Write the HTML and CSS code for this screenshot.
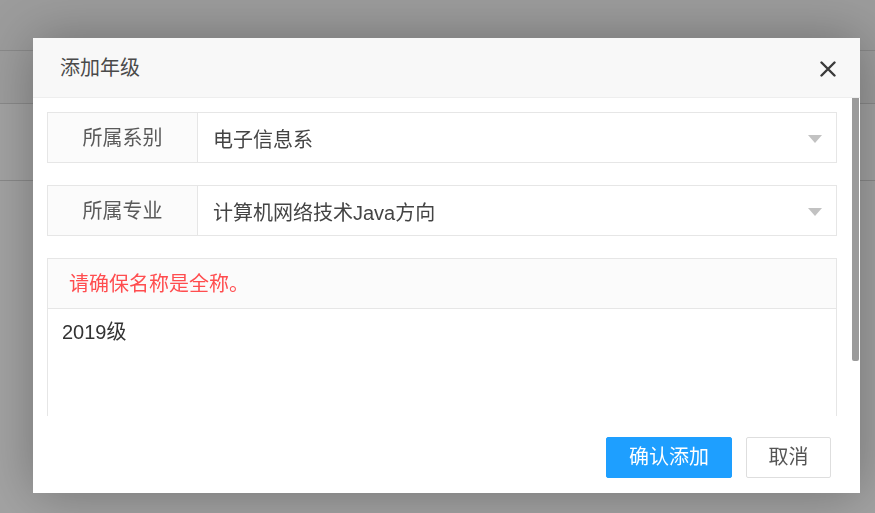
FILE: index.html
```html
<!DOCTYPE html>
<html lang="zh-CN">
<head>
  <meta charset="UTF-8">
  <meta name="viewport" content="width=device-width, initial-scale=1.0">
  <title>添加年级</title>
  <link rel="stylesheet" href="styles.css">
</head>
<body>
  <!-- page underneath the dialog -->
  <div class="page">
    <div class="page-row page-top"></div>
    <div class="page-row page-head"></div>
    <div class="page-row"></div>
  </div>

  <div class="shade"></div>

  <div class="layer">
    <div class="layer-title">
      <span>添加年级</span>
      <a class="layer-close" href="#" title="关闭">
        <svg width="16" height="16" viewBox="0 0 16 16">
          <path d="M1.5 1.5 L14.5 14.5 M14.5 1.5 L1.5 14.5" stroke="#3a3a3a" stroke-width="2.4" stroke-linecap="round"/>
        </svg>
      </a>
    </div>

    <div class="layer-content">
      <form class="form">
        <div class="form-item">
          <label class="form-label">所属系别</label>
          <div class="form-select">
            <span class="select-value">电子信息系</span>
            <i class="select-edge"></i>
          </div>
        </div>

        <div class="form-item">
          <label class="form-label">所属专业</label>
          <div class="form-select">
            <span class="select-value">计算机网络技术Java方向</span>
            <i class="select-edge"></i>
          </div>
        </div>

        <div class="form-text">
          <label class="form-text-label">请确保名称是全称。</label>
          <div class="form-textarea">2019级</div>
        </div>
      </form>
      <div class="scroll-thumb"></div>
    </div>

    <div class="layer-btns">
      <a class="btn btn-primary" href="#">确认添加</a>
      <a class="btn" href="#">取消</a>
    </div>
  </div>
</body>
</html>
```

FILE: styles.css
```css
* {
  margin: 0;
  padding: 0;
  box-sizing: border-box;
}

body {
  font-family: "Liberation Sans", "Noto Sans CJK SC", sans-serif;
  font-size: 20px;
  color: #333;
  background-color: #fff;
  width: 875px;
  height: 513px;
  overflow: hidden;
}

/* underlying page */
.page-row {
  height: 77px;
  border-bottom: 1px solid #d8d8d8;
  background-color: #fff;
}

.page-top {
  height: 51px;
  background-color: #f4f4f4;
}

.page-head {
  height: 53px;
  background-color: #f6f6f6;
}

.shade {
  position: fixed;
  inset: 0;
  background-color: rgba(0, 0, 0, 0.36);
}

/* dialog */
.layer {
  position: absolute;
  left: 33px;
  top: 38px;
  width: 827px;
  height: 455px;
  background-color: #fff;
  box-shadow: 1px 1px 50px rgba(0, 0, 0, 0.3);
  display: flex;
  flex-direction: column;
}

.layer-title {
  height: 60px;
  flex-shrink: 0;
  padding: 0 24px 0 27px;
  background-color: #f8f8f8;
  border-bottom: 1px solid #eee;
  display: flex;
  align-items: center;
  justify-content: space-between;
  color: #4a4a4a;
  line-height: 1;
}

.layer-close {
  display: flex;
  padding-top: 2px;
}

.layer-content {
  position: relative;
  height: 318px;
  flex-shrink: 0;
  overflow: hidden;
  padding: 14px 23px 0 14px;
}

.scroll-thumb {
  position: absolute;
  top: 0;
  right: 1px;
  width: 7px;
  height: 263px;
  background-color: #9b9b9b;
  border-radius: 0 0 2px 2px;
}

.form-item {
  display: flex;
  height: 51px;
  margin-bottom: 22px;
  border: 1px solid #e6e6e6;
}

.form-label {
  width: 150px;
  flex-shrink: 0;
  background-color: #fbfbfb;
  border-right: 1px solid #e6e6e6;
  text-align: center;
  line-height: 50px;
  color: #5a5a5a;
}

.form-select {
  flex: 1;
  display: flex;
  align-items: center;
  padding: 2px 14px 0 15px;
  color: #444;
}

.select-value {
  flex: 1;
}

.select-edge {
  width: 0;
  height: 0;
  border-style: solid;
  border-width: 8px 7px 0 7px;
  border-color: #c2c2c2 transparent transparent transparent;
}

.form-text {
  border: 1px solid #e6e6e6;
}

.form-text-label {
  display: block;
  height: 50px;
  padding-left: 21px;
  line-height: 50px;
  background-color: #fbfbfb;
  border-bottom: 1px solid #e6e6e6;
  color: #ff4d4f;
}

.form-textarea {
  height: 160px;
  padding: 11px 14px;
  line-height: 24px;
  color: #333;
}

/* buttons */
.layer-btns {
  flex: 1;
  display: flex;
  justify-content: flex-end;
  align-items: flex-start;
  gap: 14px;
  padding: 21px 29px 0 0;
}

.btn {
  height: 41px;
  width: 85px;
  text-align: center;
  line-height: 39px;
  border: 1px solid #dedede;
  border-radius: 2px;
  background-color: #fff;
  color: #555;
  text-decoration: none;
}

.btn-primary {
  width: 126px;
  background-color: #1e9fff;
  border-color: #1e9fff;
  color: #fff;
}
```
